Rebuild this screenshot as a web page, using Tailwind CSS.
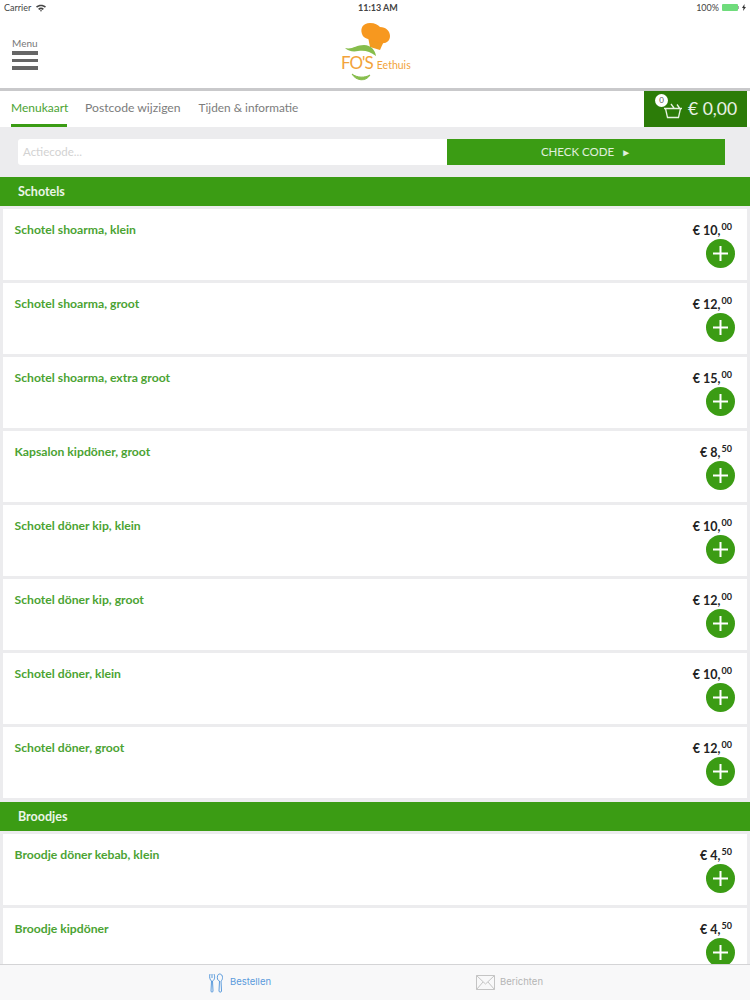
<!DOCTYPE html>
<html>
  <head>
    <meta charset="utf-8">
    <script src="https://cdn.jsdelivr.net/npm/@tailwindcss/browser@4"></script>
  </head>
  <body class="bg-[#ececee] font-['Lato','Noto_Sans',sans-serif]">
    <div id="app" class="h-[1000px] w-[750px] flex flex-col overflow-hidden"></div>
    <script>
      var schotels = [
        ["Schotel shoarma, klein", "10", "00"],
        ["Schotel shoarma, groot", "12", "00"],
        ["Schotel shoarma, extra groot", "15", "00"],
        ["Kapsalon kipdöner, groot", "8", "50"],
        ["Schotel döner kip, klein", "10", "00"],
        ["Schotel döner kip, groot", "12", "00"],
        ["Schotel döner, klein", "10", "00"],
        ["Schotel döner, groot", "12", "00"],
      ];
      var broodjes = [
        ["Broodje döner kebab, klein", "4", "50"],
        ["Broodje kipdöner", "4", "50"],
      ];

      function row(item) {
        return (`
          <div class="mx-[3px] mb-[3px] h-[71px] shrink-0 bg-white flex justify-between pl-[11.5px] pr-3">
            <div class="pt-[13px] text-[12.2px] leading-[16px] font-bold text-[#4ba333]">${item[0]}</div>
            <div class="flex flex-col items-end">
              <div class="pt-[13px] h-[30px] mr-[3px] text-[12.5px] leading-[18px] font-bold text-[#222] whitespace-nowrap">€ ${item[1]},<sup class="text-[9px] font-bold -top-[5px] ml-px">${item[2]}</sup></div>
              <div class="w-[29px] h-[29px] rounded-full bg-[#3b9c14] flex items-center justify-center">
                <svg width="17" height="17" viewBox="0 0 17 17" stroke="#fff" stroke-width="2"><path d="M8.5 1v15M1 8.5h15"/></svg>
              </div>
            </div>
          </div>
        `)
      }

      function section(title, extra) {
        return `<div class="h-[29px] mb-[3px] shrink-0 bg-[#3b9c14] pl-[18px] text-[12.5px] leading-[29px] font-bold text-white/90 ${extra}">${title}</div>`
      }

      app.innerHTML = `
        <div class="h-[88px] shrink-0 bg-white">
          <div class="h-[15px] relative flex justify-between items-center px-[4px] text-[9px] text-[#444]">
            <div class="flex items-center gap-[5px]">Carrier
              <svg width="10" height="8" viewBox="0 0 10 8" fill="#444"><path d="M0 2.6C2.8 0 7.2 0 10 2.6L8.9 3.8C6.6 1.8 3.4 1.8 1.1 3.8zM2.1 4.7C3.8 3.2 6.2 3.2 7.9 4.7L6.8 5.9C5.8 5 4.2 5 3.2 5.9zM3.9 6.6C4.5 6.1 5.5 6.1 6.1 6.6L5 7.8z"/></svg>
            </div>
            <div class="font-bold absolute left-[358px]">11:13 AM</div>
            <div class="flex items-center gap-[3px]">100%
              <div class="flex items-center">
                <div class="w-[16px] h-[7px] rounded-[1px] bg-[#6fdc7c]"></div>
                <div class="w-px h-[3px] bg-[#aaa]"></div>
              </div>
              <svg width="4" height="7" viewBox="0 0 4 7" fill="#333"><path d="M2.5 0L0 4h1.5L1 7l3-4H2.4z"/></svg>
            </div>
          </div>
          <div class="flex relative">
            <div class="pl-3 pt-[22px]">
              <div class="text-[10px] leading-[12px] text-[#777] mb-[2px]">Menu</div>
              <div class="w-[26px] flex flex-col gap-[4px]">
                <div class="h-[3.5px] bg-[#666]"></div>
                <div class="h-[3.5px] bg-[#666]"></div>
                <div class="h-[3.5px] bg-[#666]"></div>
              </div>
            </div>
            <div class="absolute left-[338px] top-[6px] w-[76px] h-[62px]">
              <svg width="76" height="62" viewBox="0 0 76 62" class="absolute left-0 top-0">
                <path d="M30 16L46 20L42 29L32 26Z" fill="#f39a1f"/>
                <path d="M24 13C22 7 25 2 32 2C37 2 40 4 42 6C48 6 52 10 52 15C52 20 48 23 43 22L30 18C27 17 25 16 24 13Z" fill="#f7981f"/>
                <path d="M7 27C14 29 18 24 26 24C33 24 37 29 38 35C32 30 26 29 20 30C15 31 10 30 7 27Z" fill="#86bd4c"/>
                <path d="M14 53C18 60 28 61 32 54C27 57 19 57 14 53Z" fill="#86bd4c" stroke="#86bd4c"/>
              </svg>
              <div class="absolute left-[3px] top-[31px] flex items-baseline whitespace-nowrap text-[#f2a33a]">
                <span class="text-[17px] leading-[22px] tracking-[-1px]">FO'S</span>
                <span class="text-[10.5px] ml-[4px]">Eethuis</span>
              </div>
            </div>
          </div>
        </div>
        <div class="h-[3px] shrink-0 bg-[#c9c9cb]"></div>
        <div class="h-[36px] shrink-0 bg-white flex justify-between pl-[11px] pr-[3px] relative">
          <div class="flex gap-[18px] text-[12px] text-[#7c7c7c]">
            <div class="h-[36px] border-b-[3px] border-[#3b9c14] text-[#4ba333] pt-[8px] w-[56px] whitespace-nowrap">Menukaart</div>
            <div class="pt-[8px] text-[12.2px]">Postcode wijzigen</div>
            <div class="pt-[8px] text-[11.8px]">Tijden &amp; informatie</div>
          </div>
          <div class="w-[103px] h-[36px] bg-[#2c7c08] flex items-center pl-[19px] gap-[5px] text-[17.5px] text-white/90 relative">
            <svg width="20" height="16" viewBox="0 0 20 16" fill="none" stroke="#e8f3e2" stroke-width="1.3" class="mt-[3px]"><path d="M1 5.500h18M2.500 5.500l2 9h11l2-9M11 5L8 1M14 1.500l2.500 3.500"/></svg>
            <div class="absolute left-[11px] top-[3px] w-[13px] h-[13px] rounded-full bg-white text-[#555] text-[8px] leading-[13px] text-center">0</div>
            <span>€ 0,00</span>
          </div>
        </div>
        <div class="h-[50px] shrink-0 flex pl-[18px] pr-[25px] pt-[12px]">
          <div class="w-[429px] h-[26px] bg-white rounded-l-[3px] pl-[5px] text-[11.5px] leading-[26px] text-[#d2d2d2]">Actiecode...</div>
          <div class="flex-1 h-[26px] bg-[#3b9c14] text-white/85 text-[11.5px] leading-[26px] flex items-center justify-center gap-[7px]">CHECK CODE <span class="text-[10px]">►</span></div>
        </div>
        <div class="flex-1 flex flex-col overflow-hidden">
          ${section("Schotels", "")}
          ${schotels.map(row).join('')}
          ${section("Broodjes", "mt-px")}
          ${broodjes.map(row).join('')}
        </div>
        <div class="h-[36px] shrink-0 bg-[#f8f8f9] border-t border-[#d4d4d6] flex text-[9.5px] font-['Inter',sans-serif]">
          <div class="flex items-center gap-[7px] pl-[209px] w-[476px] text-[#5b9bdc]">
            <svg width="14" height="20" viewBox="0 0 14 20" fill="none" stroke="#5b9bdc" stroke-width="1"><path d="M1 1C0 4 1 7 2.500 8L2 18C2 19.500 4 19.500 4 18L3.500 8C6 7 6 3 5 1M3 1V5"/><path d="M10.500 1C8.500 1 8 4 8.500 6C9 7.500 10 8 10.500 8L10 18C10 19.500 12.500 19.500 12.500 18L12 8C13 7.500 13.500 6 13.500 4.500C13.500 2.500 12.500 1 10.500 1Z"/></svg>
            <span>Bestellen</span>
          </div>
          <div class="flex items-center gap-[5px] text-[#b5b5b5]">
            <svg width="19" height="15" viewBox="0 0 19 15" fill="none" stroke="#c4c4c4" stroke-width="1"><path d="M.5.500h18v14H.5zM.5.500L9.500 9l9-8.500M.5 14.500L7 7M18.500 14.500L12 7"/></svg>
            <span>Berichten</span>
          </div>
        </div>
      `;
    </script>
  </body>
</html>
